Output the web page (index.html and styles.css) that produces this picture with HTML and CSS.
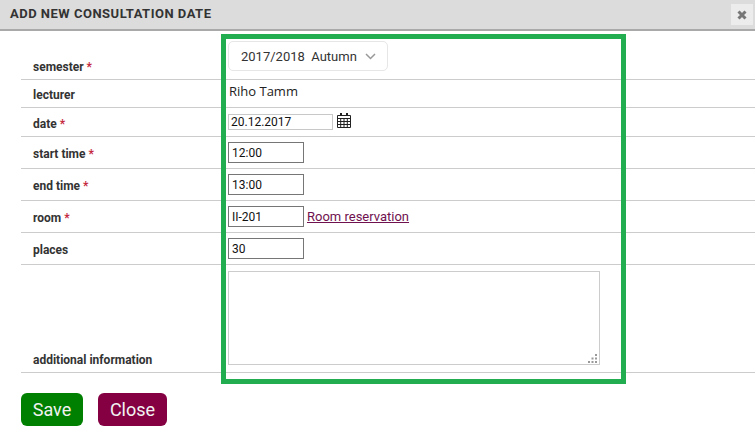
FILE: index.html
```html
<!DOCTYPE html>
<html lang="en">
<head>
<meta charset="utf-8">
<title>Add new consultation date</title>
<link rel="stylesheet" href="styles.css">
</head>
<body>
<header class="titlebar">
  <h1 class="title">ADD NEW CONSULTATION DATE</h1>
  <button class="close-x" type="button" aria-label="Close">
    <svg width="10" height="10" viewBox="0 0 10 10"><path d="M1.500 1.500L8.500 8.500M8.500 1.500L1.500 8.500" stroke="#777" stroke-width="3" fill="none"/></svg>
  </button>
</header>
<main class="content">
  <div class="form">
    <div class="row row-semester">
      <div class="label">semester <span class="req">*</span></div>
      <div class="value"><div class="select">2017/2018&nbsp; Autumn<svg class="chev" width="11" height="7" viewBox="0 0 11 7"><path d="M1 1l4.500 4.500L10 1" stroke="#999" stroke-width="1.500" fill="none"/></svg></div></div>
    </div>
    <div class="row row-lecturer">
      <div class="label">lecturer</div>
      <div class="value lecturer">Riho Tamm</div>
    </div>
    <div class="row row-date">
      <div class="label">date <span class="req">*</span></div>
      <div class="value">
        <input class="input input-date" value="20.12.2017">
        <svg class="cal" width="14" height="15" viewBox="0 0 14 15"><path d="M3 0h2v3h-2zM9 0h2v3h-2z" fill="#222"/><path d="M0.500 2.500h13v12h-13zM0.500 5.500h13M0.500 8.500h13M0.500 11.500h13M3.700 5.500v9M7 5.500v9M10.300 5.500v9" stroke="#222" fill="none"/></svg>
      </div>
    </div>
    <div class="row row-field">
      <div class="label">start time <span class="req">*</span></div>
      <div class="value"><input class="input" value="12:00"></div>
    </div>
    <div class="row row-field">
      <div class="label">end time <span class="req">*</span></div>
      <div class="value"><input class="input" value="13:00"></div>
    </div>
    <div class="row row-field">
      <div class="label">room <span class="req">*</span></div>
      <div class="value"><input class="input" value="II-201"><a class="link" href="#">Room reservation</a></div>
    </div>
    <div class="row row-field">
      <div class="label">places</div>
      <div class="value"><input class="input" value="30"></div>
    </div>
    <div class="row row-info">
      <div class="label">additional information</div>
      <div class="value">
        <div class="area-wrap">
          <textarea class="area"></textarea>
          <svg class="grip" width="9" height="9" viewBox="0 0 9 9"><path d="M7 0h2v2h-2zM3.500 3.500h2v2h-2zM7 3.500h2v2h-2zM0 7h2v2h-2zM3.500 7h2v2h-2zM7 7h2v2h-2z" fill="#999"/></svg>
        </div>
      </div>
    </div>
  </div>
  <div class="actions">
    <button class="btn btn-save" type="button">Save</button>
    <button class="btn btn-close" type="button">Close</button>
  </div>
  <div class="highlight"></div>
</main>
</body>
</html>
```

FILE: styles.css
```css
* { box-sizing: border-box; }
html, body { margin: 0; padding: 0; background: #fff; }
body { width: 755px; height: 444px; overflow: hidden; font-family: Roboto, "Liberation Sans", sans-serif; color: #222; }
.titlebar { height: 31px; background: #dcdcdc; border-bottom: 2px solid #a9a9a9; display: flex; align-items: flex-start; justify-content: space-between; padding: 0 2px 0 10px; }
.title { margin: 0; font-size: 13px; font-weight: 700; letter-spacing: 0.5px; color: #333; line-height: 27px; }
.close-x { width: 22px; height: 21px; margin-top: 4px; padding: 0; border: 0; background: #ececec; display: flex; align-items: center; justify-content: center; }
.content { position: relative; padding-left: 21px; }
.row { display: grid; grid-template-columns: 207px 1fr; border-bottom: 1px solid #ccc; }
.label { align-self: end; padding-left: 12px; font-size: 12px; font-weight: 700; line-height: 14px; color: #333; }
.req { color: #c4283c; }
.row-semester { height: 49px; }
.row-semester .label { padding-bottom: 5px; }
.row-lecturer { height: 28px; }
.row-lecturer .label { padding-bottom: 5px; }
.row-date { height: 29px; }
.row-date .label { padding-bottom: 5px; }
.row-field { height: 32px; }
.row-field .label { padding-bottom: 7px; }
.row-info { height: 108px; }
.row-info .label { padding-bottom: 5px; }
.value { display: flex; align-items: center; font-size: 13px; }
.select { width: 160px; height: 30px; margin-top: 10px; border: 1px solid #e6e6e6; border-radius: 5px; display: flex; align-items: center; padding-left: 12px; font-size: 13px; color: #333; align-self: flex-start; position: relative; }
.chev { position: absolute; right: 11px; top: 11px; }
.lecturer { font-family: "Open Sans", sans-serif; font-size: 13px; padding: 0 0 5px 1px; color: #222; }
.input { width: 76px; height: 21px; border: 1px solid #767676; background: #fff; padding: 0 3px; font: 12px Roboto, sans-serif; color: #111; margin: 0; border-radius: 0; }
.input-date { width: 105px; height: 16px; border-color: #c8c8c8; padding: 0 2px; margin-bottom: 1px; }
.cal { margin: 0 0 4px 4px; }
.link { margin-left: 3px; color: #70114f; font-size: 13px; }
.area-wrap { position: relative; width: 372px; height: 94px; margin-top: 6px; align-self: flex-start; }
.area { display: block; width: 100%; height: 100%; margin: 0; border: 1px solid #ccc; padding: 2px; background: #fff; resize: none; }
.grip { position: absolute; right: 3px; bottom: 2px; }
.actions { display: flex; gap: 15px; padding-top: 20px; }
.btn { height: 33px; border: 0; border-radius: 6px; color: #f2f2f2; font: 400 18px Roboto, sans-serif; padding: 0; }
.btn-save { width: 62px; background: #008000; }
.btn-close { width: 69px; background: #840042; }
.highlight { position: absolute; left: 221px; top: 3px; width: 405px; height: 350px; border: 5px solid #21ad50; pointer-events: none; }
```
